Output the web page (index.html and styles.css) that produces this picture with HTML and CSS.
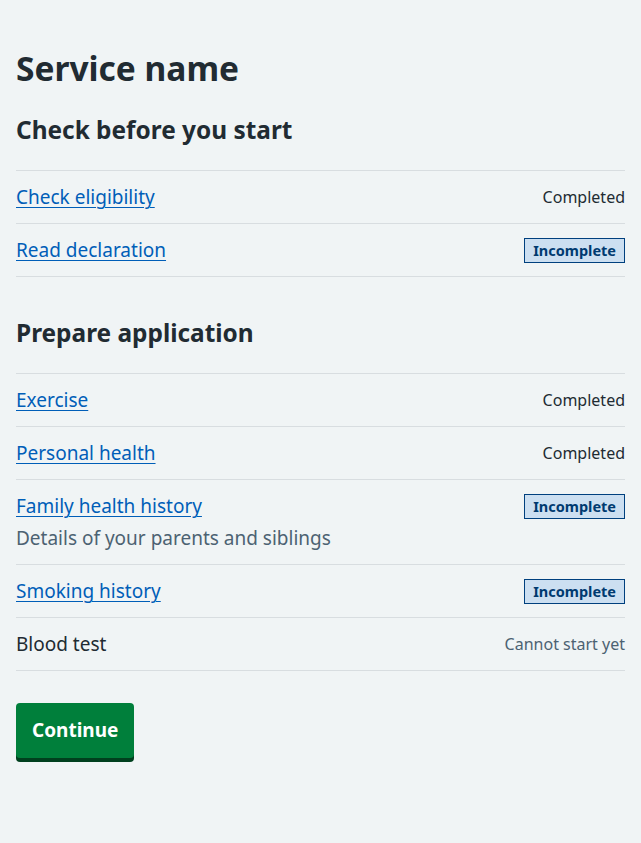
FILE: index.html
```html
<!DOCTYPE html>
<html lang="en">
<head>
<meta charset="utf-8">
<title>Service name</title>
<link rel="stylesheet" href="styles.css">
</head>
<body>
<main class="page">
  <h1 class="title">Service name</h1>

  <h2 class="section-title">Check before you start</h2>
  <ul class="task-list">
    <li class="task">
      <div class="task-name"><a href="#" class="task-link">Check eligibility</a></div>
      <div class="task-status">Completed</div>
    </li>
    <li class="task">
      <div class="task-name"><a href="#" class="task-link">Read declaration</a></div>
      <div class="task-status"><strong class="tag">Incomplete</strong></div>
    </li>
  </ul>

  <h2 class="section-title">Prepare application</h2>
  <ul class="task-list">
    <li class="task">
      <div class="task-name"><a href="#" class="task-link">Exercise</a></div>
      <div class="task-status">Completed</div>
    </li>
    <li class="task">
      <div class="task-name"><a href="#" class="task-link">Personal health</a></div>
      <div class="task-status">Completed</div>
    </li>
    <li class="task">
      <div class="task-name">
        <a href="#" class="task-link">Family health history</a>
        <div class="task-hint">Details of your parents and siblings</div>
      </div>
      <div class="task-status"><strong class="tag">Incomplete</strong></div>
    </li>
    <li class="task">
      <div class="task-name"><a href="#" class="task-link">Smoking history</a></div>
      <div class="task-status"><strong class="tag">Incomplete</strong></div>
    </li>
    <li class="task">
      <div class="task-name">Blood test</div>
      <div class="task-status task-status-muted">Cannot start yet</div>
    </li>
  </ul>

  <button class="button" type="button">Continue</button>
</main>
</body>
</html>
```

FILE: styles.css
```css
* { box-sizing: border-box; }

html, body {
  margin: 0;
  padding: 0;
  background: #f0f4f5;
}

body {
  font-family: "Noto Sans", "Open Sans", sans-serif;
  color: #212b32;
}

.page {
  padding: 46px 16px 40px;
}

.title {
  font-size: 33.5px;
  line-height: 44px;
  font-weight: 700;
  margin: 0 0 24px;
}

.section-title {
  font-size: 24.4px;
  line-height: 32px;
  font-weight: 700;
  margin: 0 0 24px;
}

.task-list {
  list-style: none;
  margin: 0 0 40px;
  padding: 0;
  border-top: 1px solid #d8dde0;
}

.task-list:last-of-type {
  margin-bottom: 32px;
}

.task {
  display: flex;
  justify-content: space-between;
  align-items: flex-start;
  gap: 16px;
  padding: 12px 0;
  border-bottom: 1px solid #d8dde0;
  font-size: 19px;
  line-height: 28px;
}

.task-link {
  color: #005eb8;
  text-decoration: underline;
  text-underline-offset: 3px;
  text-decoration-thickness: 1px;
}

.task-hint {
  color: #4c6272;
  margin-top: 4px;
}

.task-status {
  font-size: 16px;
  line-height: 24px;
  padding-top: 2px;
  text-align: right;
  white-space: nowrap;
}

.task-status-muted {
  color: #4c6272;
}

.tag {
  display: inline-block;
  font-size: 14.5px;
  line-height: 17px;
  font-weight: 700;
  padding: 3px 8px;
  color: #003a70;
  background: #ccdff1;
  border: 1px solid #00407e;
}

.button {
  display: inline-block;
  font-family: inherit;
  font-size: 19px;
  line-height: 28px;
  font-weight: 700;
  color: #ffffff;
  background: #007f3b;
  border: 0;
  border-radius: 4px;
  padding: 13px 16px 14px;
  box-shadow: 0 4px 0 #00401e;
  cursor: pointer;
}
```
